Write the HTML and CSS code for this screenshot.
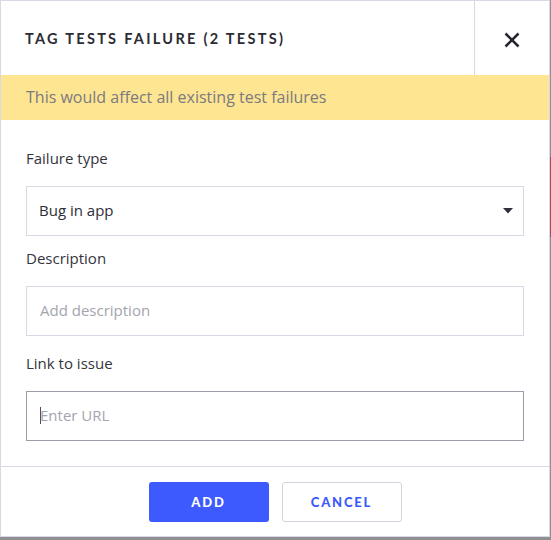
FILE: index.html
```html
<!DOCTYPE html>
<html>
<head>
<meta charset="utf-8">
<link rel="stylesheet" href="styles.css">
</head>
<body>
<div class="backdrop-strip"></div>
<div class="modal">
  <div class="modal-header">
    <div class="modal-title">TAG TESTS FAILURE (2 TESTS)</div>
    <button class="close-btn" aria-label="Close">
      <svg width="16" height="16" viewBox="0 0 16 16"><path d="M1.5 1.5 L14.5 14.5 M14.5 1.5 L1.5 14.5" stroke="#25272e" stroke-width="2.5" stroke-linecap="butt" fill="none"/></svg>
    </button>
  </div>
  <div class="banner">This would affect all existing test failures</div>
  <div class="modal-body">
    <div class="label label-first">Failure type</div>
    <div class="select">
      <span>Bug in app</span>
      <svg class="caret" width="10" height="6" viewBox="0 0 10 6"><path d="M0 0 H10 L5 5.5 Z" fill="#2f3038"/></svg>
    </div>
    <div class="label label-desc">Description</div>
    <div class="input"><span class="placeholder">Add description</span></div>
    <div class="label label-link">Link to issue</div>
    <div class="input input-focus"><span class="cursor"></span><span class="placeholder">Enter URL</span></div>
  </div>
  <div class="modal-footer">
    <button class="btn btn-primary">ADD</button>
    <button class="btn btn-secondary">CANCEL</button>
  </div>
</div>
</body>
</html>
```
FILE: styles.css
```css
html, body {
  margin: 0;
  padding: 0;
}
body {
  background: #8f8f8f;
  width: 551px;
  height: 540px;
  overflow: hidden;
  position: relative;
  font-family: "Open Sans", "Noto Sans", sans-serif;
}
.backdrop-strip {
  position: absolute;
  left: 550px;
  top: 157px;
  width: 1px;
  height: 80px;
  background: #a84a58;
}
.modal {
  position: relative;
  width: 548px;
  height: 535px;
  border: 1px solid #d7d9e6;
  background: #ffffff;
  display: flex;
  flex-direction: column;
}
.modal-header {
  height: 74px;
  display: flex;
}
.modal-title {
  flex: 1;
  display: flex;
  align-items: center;
  padding-left: 24px;
  font-family: Lato, sans-serif;
  font-weight: 700;
  font-size: 14.5px;
  letter-spacing: 2.3px;
  color: #2b2b33;
  padding-top: 1px;
}
.close-btn {
  width: 75px;
  height: 74px;
  border: none;
  border-left: 1px solid #d7d9e6;
  background: #fff;
  padding: 4px 0 0 0;
  display: flex;
  align-items: center;
  justify-content: center;
}
.banner {
  height: 45px;
  background: #fee591;
  color: #7a7a80;
  font-size: 16px;
  line-height: 45px;
  padding-left: 25px;
}
.modal-body {
  padding: 28px 25px 25px 25px;
  display: flex;
  flex-direction: column;
}
.label {
  font-size: 15px;
  line-height: 20px;
  color: #34343c;
}
.label-desc { margin-top: 12px; }
.label-link { margin-top: 17px; }
.select, .input {
  margin-top: 18px;
  height: 46px;
  padding-bottom: 2px;
  border: 1px solid #d9d9e4;
  display: flex;
  align-items: center;
  padding-left: 12px;
  padding-right: 10px;
  font-size: 15px;
}
.select {
  justify-content: space-between;
  color: #2e2e36;
}
.caret {
  margin-top: 2px;
}
.input {
  padding-left: 13px;
}
.input-focus {
  border-color: #9c9ca8;
}
.placeholder {
  color: #a4a4ae;
}
.cursor {
  width: 1px;
  height: 17px;
  background: #50505a;
  margin-right: -1px;
}
.modal-footer {
  border-top: 1px solid #d7d9e6;
  flex: 1;
  display: flex;
  justify-content: center;
  align-items: flex-start;
  padding-top: 15px;
  gap: 13px;
}
.btn {
  width: 120px;
  height: 40px;
  border-radius: 3px;
  font-family: Lato, sans-serif;
  font-weight: 900;
  font-size: 13px;
  letter-spacing: 1.8px;
  cursor: pointer;
}
.btn-primary {
  background: #3d5afe;
  color: #fff;
  border: none;
}
.btn-secondary {
  background: #fff;
  color: #3d5afe;
  border: 1px solid #d3d3de;
}
```
